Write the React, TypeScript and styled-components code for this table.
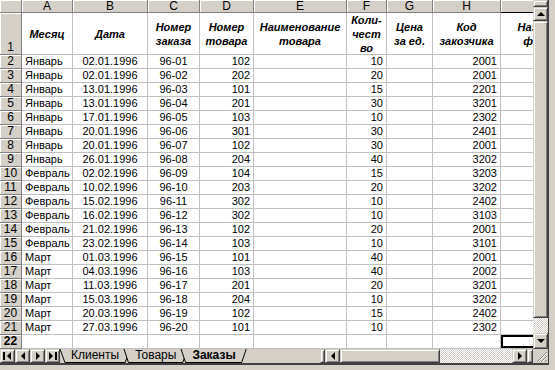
import React from "react";
import styled, { createGlobalStyle, css } from "styled-components";

const GlobalStyle = createGlobalStyle`
  html, body {
    margin: 0;
    padding: 0;
    background: #d4d0c8;
  }
  body {
    font-family: "Liberation Sans", Arial, sans-serif;
  }
`;

const raised = css`
  box-sizing: border-box;
  background: #d4d0c8;
  border: 1px solid;
  border-color: #d4d0c8 #404040 #404040 #d4d0c8;
  box-shadow: inset 1px 1px #fff, inset -1px -1px #808080;
`;

const checker = css`
  background-color: #d4d0c8;
  background-image: repeating-conic-gradient(#fff 0% 25%, #d4d0c8 0% 50%);
  background-size: 2px 2px;
`;

const Window = styled.div`
  width: 555px;
  height: 370px;
  background: #d4d0c8;
  overflow: hidden;
`;

const Frame = styled.div`
  width: 549px;
  height: 365px;
  box-sizing: border-box;
  border-right: 1px solid #404040;
  border-bottom: 2px solid #404040;
  display: flex;
  flex-direction: column;
`;

const Main = styled.div`
  display: flex;
  height: 349px;
`;

const SheetView = styled.div`
  width: 533px;
  height: 349px;
  overflow: hidden;
  background: #fff;
`;

const Grid = styled.div`
  display: grid;
  grid-template-columns: 22px 51px 75px 52px 54px 93px 40px 46px 68px 86px;
  grid-template-rows: 13px 42px repeat(21, 14px);
  width: 587px;
`;

const headBase = css`
  box-sizing: border-box;
  background: #d4d0c8;
  border-right: 1px solid #808080;
  border-bottom: 1px solid #808080;
  box-shadow: inset 1px 1px #fff;
  color: #000;
  font-size: 12px;
  display: flex;
  justify-content: center;
`;

const Corner = styled.div`
  ${headBase}
`;

const ColHead = styled.div<{ $active?: boolean }>`
  ${headBase}
  align-items: center;
  line-height: 12px;
  ${(p) => p.$active && "border-bottom-color: #000;"}
`;

const RowHead = styled.div<{ $bottom?: boolean; $bold?: boolean }>`
  ${headBase}
  align-items: ${(p) => (p.$bottom ? "flex-end" : "center")};
  line-height: 13px;
  font-weight: ${(p) => (p.$bold ? 700 : 400)};
`;

const Cell = styled.div<{ $align?: "left" | "center" | "right"; $active?: boolean }>`
  box-sizing: border-box;
  border-right: 1px solid #c0c0c0;
  border-bottom: 1px solid #c0c0c0;
  font-size: 11px;
  line-height: 13px;
  color: #000;
  padding: 0 3px 0 3px;
  white-space: nowrap;
  overflow: hidden;
  text-align: ${(p) => p.$align || "left"};
  ${(p) => p.$active && "box-shadow: inset 0 0 0 2px #000;"}
`;

const TitleCell = styled.div`
  box-sizing: border-box;
  border-right: 1px solid #c0c0c0;
  border-bottom: 1px solid #c0c0c0;
  display: flex;
  flex-direction: column;
  justify-content: center;
  align-items: center;
  font-size: 11px;
  line-height: 14px;
  font-weight: 700;
  font-style: italic;
  white-space: nowrap;
  color: #000;
`;

const VScroll = styled.div`
  width: 15px;
  display: flex;
  flex-direction: column;
`;

const SplitBox = styled.div<{ $h: number }>`
  ${raised}
  height: ${(p) => p.$h}px;
`;

const ArrowBtn = styled.div<{ $w?: number; $h?: number }>`
  ${raised}
  width: ${(p) => (p.$w ? `${p.$w}px` : "100%")};
  height: ${(p) => (p.$h ? `${p.$h}px` : "100%")};
  flex-shrink: 0;
  display: flex;
  align-items: center;
  justify-content: center;
`;

const Thumb = styled.div`
  ${raised}
  flex: 1;
`;

const Track = styled.div<{ $h?: number; $w?: number }>`
  ${checker}
  ${(p) => (p.$h ? `height: ${p.$h}px;` : "")}
  ${(p) => (p.$w ? `width: ${p.$w}px;` : "")}
  flex-shrink: 0;
`;

const BottomBar = styled.div`
  height: 14px;
  display: flex;
  align-items: stretch;
`;

const NavGroup = styled.div`
  display: flex;
  width: 60px;
`;

const Tabs = styled.div`
  display: flex;
  width: 260px;
`;

const Tab = styled.div<{ $active?: boolean }>`
  position: relative;
  margin-left: -6px;
  padding: 0 11px;
  height: 14px;
  font-size: 12px;
  line-height: 13px;
  font-weight: ${(p) => (p.$active ? 700 : 400)};
  z-index: ${(p) => (p.$active ? 3 : 1)};
  color: #000;
  &:first-child {
    margin-left: 0;
  }
  span {
    position: relative;
  }
`;

const TabShape = styled.svg`
  position: absolute;
  left: 0;
  top: 0;
  width: 100%;
  height: 100%;
  overflow: visible;
`;

const HScroll = styled.div`
  display: flex;
  width: 213px;
`;

const Grip = styled.div`
  width: 15px;
  background: #d4d0c8;
  display: flex;
  align-items: flex-end;
  justify-content: flex-end;
`;

const cols = ["A", "B", "C", "D", "E", "F", "G", "H", "I"];

const titles: string[][] = [
  ["Месяц"],
  ["Дата"],
  ["Номер", "заказа"],
  ["Номер", "товара"],
  ["Наименование", "товара"],
  ["Коли-", "чест", "во"],
  ["Цена", "за ед."],
  ["Код", "закозчика"],
  ["Название", "фирмы"],
];

const rows: string[][] = [
  ["Январь", "02.01.1996", "96-01", "102", "10", "2001"],
  ["Январь", "02.01.1996", "96-02", "202", "20", "2001"],
  ["Январь", "13.01.1996", "96-03", "101", "15", "2201"],
  ["Январь", "13.01.1996", "96-04", "201", "30", "3201"],
  ["Январь", "17.01.1996", "96-05", "103", "10", "2302"],
  ["Январь", "20.01.1996", "96-06", "301", "30", "2401"],
  ["Январь", "20.01.1996", "96-07", "102", "30", "2001"],
  ["Январь", "26.01.1996", "96-08", "204", "40", "3202"],
  ["Февраль", "02.02.1996", "96-09", "104", "15", "3203"],
  ["Февраль", "10.02.1996", "96-10", "203", "20", "3202"],
  ["Февраль", "15.02.1996", "96-11", "302", "10", "2402"],
  ["Февраль", "16.02.1996", "96-12", "302", "10", "3103"],
  ["Февраль", "21.02.1996", "96-13", "102", "20", "2001"],
  ["Февраль", "23.02.1996", "96-14", "103", "10", "3101"],
  ["Март", "01.03.1996", "96-15", "101", "40", "2001"],
  ["Март", "04.03.1996", "96-16", "103", "40", "2002"],
  ["Март", "11.03.1996", "96-17", "201", "20", "3201"],
  ["Март", "15.03.1996", "96-18", "204", "10", "3202"],
  ["Март", "20.03.1996", "96-19", "102", "15", "2402"],
  ["Март", "27.03.1996", "96-20", "101", "10", "2302"],
];

type Dir = "up" | "down" | "left" | "right";

function Arrow({ dir, bar }: { dir: Dir; bar?: "start" | "end" }) {
  const pts: Record<Dir, string> = {
    up: "0,5 8,5 4,1",
    down: "0,1 8,1 4,5",
    left: "5,0 5,8 1,4",
    right: "1,0 1,8 5,4",
  };
  const horiz = dir === "left" || dir === "right";
  return (
    <svg
      width={horiz ? (bar ? 9 : 6) : 8}
      height={horiz ? 8 : 6}
      viewBox={horiz ? `0 0 ${bar ? 9 : 6} 8` : "0 0 8 6"}
    >
      <g transform={bar === "start" ? "translate(3,0)" : undefined}>
        <polygon points={pts[dir]} fill="#000" />
      </g>
      {bar === "start" && <rect x="0" y="0" width="2" height="8" fill="#000" />}
      {bar === "end" && <rect x="7" y="0" width="2" height="8" fill="#000" />}
    </svg>
  );
}

function SheetTab({ label, active }: { label: string; active?: boolean }) {
  return (
    <Tab $active={active}>
      <TabShape viewBox="0 0 100 14" preserveAspectRatio="none">
        <polygon points="0,0 100,0 93,13.5 7,13.5" fill="#d4d0c8" />
        <polyline
          points="0,0 7,13.5 93,13.5 100,0"
          fill="none"
          stroke="#000"
          strokeWidth="1"
          vectorEffect="non-scaling-stroke"
        />
      </TabShape>
      <span>{label}</span>
    </Tab>
  );
}

export default function App() {
  return (
    <Window>
      <GlobalStyle />
      <Frame>
        <Main>
          <SheetView>
            <Grid>
              <Corner />
              {cols.map((c) => (
                <ColHead key={c} $active={c === "I"}>
                  {c}
                </ColHead>
              ))}
              <RowHead $bottom>1</RowHead>
              {titles.map((t, i) => (
                <TitleCell key={i}>
                  {t.map((line) => (
                    <div key={line}>{line}</div>
                  ))}
                </TitleCell>
              ))}
              {rows.map((r, i) => (
                <React.Fragment key={i}>
                  <RowHead>{i + 2}</RowHead>
                  <Cell>{r[0]}</Cell>
                  <Cell $align="center">{r[1]}</Cell>
                  <Cell $align="center">{r[2]}</Cell>
                  <Cell $align="right">{r[3]}</Cell>
                  <Cell />
                  <Cell $align="right">{r[4]}</Cell>
                  <Cell />
                  <Cell $align="right">{r[5]}</Cell>
                  <Cell />
                </React.Fragment>
              ))}
              <RowHead $bold>22</RowHead>
              {cols.slice(0, 8).map((c) => (
                <Cell key={c} />
              ))}
              <Cell $active />
            </Grid>
          </SheetView>
          <VScroll>
            <SplitBox $h={7} />
            <ArrowBtn $h={14}>
              <Arrow dir="up" />
            </ArrowBtn>
            <Thumb />
            <Track $h={15} />
            <ArrowBtn $h={16}>
              <Arrow dir="down" />
            </ArrowBtn>
          </VScroll>
        </Main>
        <BottomBar>
          <NavGroup>
            <ArrowBtn $w={15}>
              <Arrow dir="left" bar="start" />
            </ArrowBtn>
            <ArrowBtn $w={15}>
              <Arrow dir="left" />
            </ArrowBtn>
            <ArrowBtn $w={15}>
              <Arrow dir="right" />
            </ArrowBtn>
            <ArrowBtn $w={15}>
              <Arrow dir="right" bar="end" />
            </ArrowBtn>
          </NavGroup>
          <Tabs>
            <SheetTab label="Клиенты" />
            <SheetTab label="Товары" />
            <SheetTab label="Заказы" active />
          </Tabs>
          <HScroll>
            <SplitBox $h={14} style={{ width: 5 }} />
            <ArrowBtn $w={15}>
              <Arrow dir="left" />
            </ArrowBtn>
            <Thumb style={{ flex: "none", width: 100 }} />
            <Track $w={72} />
            <ArrowBtn $w={15}>
              <Arrow dir="right" />
            </ArrowBtn>
            <SplitBox $h={14} style={{ width: 6 }} />
          </HScroll>
          <Grip>
            <svg width="12" height="12" viewBox="0 0 12 12">
              <path d="M11 1 L1 11 M11 5 L5 11 M11 9 L9 11" stroke="#808080" strokeWidth="1" />
              <path d="M11 2 L2 11 M11 6 L6 11 M11 10 L10 11" stroke="#fff" strokeWidth="1" />
            </svg>
          </Grip>
        </BottomBar>
      </Frame>
    </Window>
  );
}
